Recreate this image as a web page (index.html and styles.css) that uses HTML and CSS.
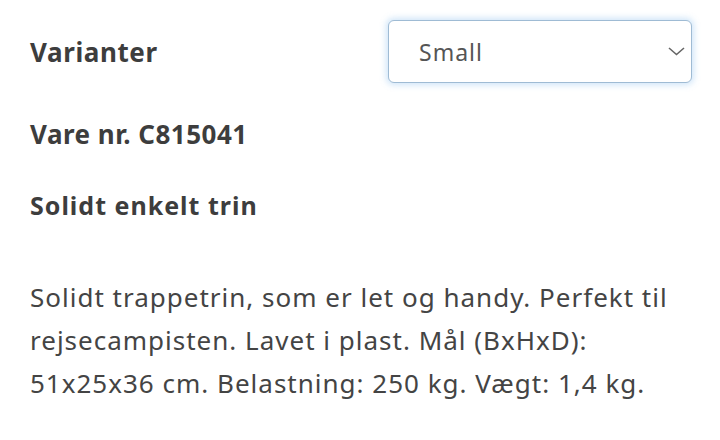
FILE: index.html
```html
<!DOCTYPE html>
<html lang="da">
<head>
	<meta charset="UTF-8">
	<title>Solidt enkelt trin</title>
	<link rel="stylesheet" href="styles.css">
</head>
<body>
	<div class="product">
		<div class="variant-row">
			<label class="label" for="variant">Varianter</label>
			<div class="select-wrap">
				<select id="variant" class="select">
					<option>Small</option>
					<option>Large</option>
				</select>
				<svg class="chevron" width="17" height="9" viewBox="0 0 17 9"><path d="M1 1l7.5 6.5L16 1" fill="none" stroke="#666" stroke-width="1.6"/></svg>
			</div>
		</div>
		<h3 class="sku">Vare nr. C815041</h3>
		<h3 class="title">Solidt enkelt trin</h3>
		<p class="desc">Solidt trappetrin, som er let og handy. Perfekt til rejsecampisten. Lavet i plast. Mål (BxHxD): 51x25x36 cm. Belastning: 250 kg. Vægt: 1,4 kg.</p>
	</div>
</body>
</html>
```

FILE: styles.css
```css
*{
	margin: 0;
	padding: 0;
	box-sizing: border-box;
}
body{
	background: #fff;
	font-family: "Noto Sans", "Open Sans", sans-serif;
	color: #3d3d3d;
}
.product{
	padding: 20px 30px 0 30px;
	width: 720px;
}
.variant-row{
	display: grid;
	grid-template-columns: 358px 304px;
	align-items: center;
}
.label{
	font-size: 26px;
	font-weight: bold;
	letter-spacing: 0.6px;
}
.select-wrap{
	position: relative;
	height: 63px;
}
.select{
	width: 100%;
	height: 63px;
	border: 1px solid #9fbbd4;
	border-radius: 6px;
	box-shadow: 0 0 6px 2px rgba(120,180,235,0.35);
	background: #fff;
	padding-left: 30px;
	font-family: inherit;
	font-size: 23px;
	letter-spacing: 1px;
	color: #555;
	appearance: none;
	-webkit-appearance: none;
	outline: none;
}
.chevron{
	position: absolute;
	right: 7px;
	top: 27px;
}
.sku{
	font-size: 26px;
	font-weight: bold;
	letter-spacing: 0.5px;
	margin-top: 33px;
}
.title{
	font-size: 25px;
	font-weight: bold;
	letter-spacing: 1px;
	margin-top: 36px;
}
.desc{
	font-size: 26px;
	letter-spacing: 1px;
	line-height: 43px;
	margin-top: 54px;
	width: 670px;
	color: #444;
}
```
